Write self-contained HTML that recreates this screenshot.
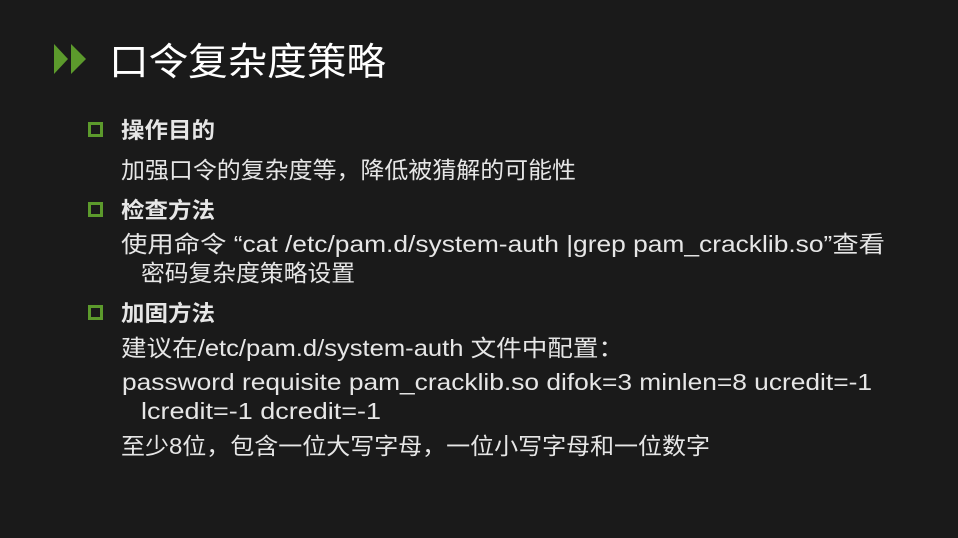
<!DOCTYPE html>
<html><head><meta charset="utf-8"><style>
html,body{margin:0;padding:0;background:#1a1a1a;width:958px;height:538px;overflow:hidden}
svg{display:block}
text{font-family:"Liberation Sans","Noto Sans CJK SC",sans-serif;fill:#e6e6e6}
</style></head><body>
<svg width="958" height="538" viewBox="0 0 958 538">
<rect width="958" height="538" fill="#1a1a1a"/>
<polygon points="54,44 68,59 54,74" fill="#5c9a2c"/>
<polygon points="71,44 86,59 71,74" fill="#5c9a2c"/>
<text x="109" y="75" font-size="38" style="fill:#fff" textLength="277" lengthAdjust="spacingAndGlyphs">口令复杂度策略</text>
<g fill="none" stroke="#5c9a2c" stroke-width="3">
<rect x="89.5" y="123.5" width="12" height="12"/>
<rect x="89.5" y="203.5" width="12" height="12"/>
<rect x="89.5" y="306.5" width="12" height="12"/>
</g>
<g font-weight="bold" font-size="22">
<text x="121" y="138" textLength="94" lengthAdjust="spacingAndGlyphs">操作目的</text>
<text x="121" y="218" textLength="94" lengthAdjust="spacingAndGlyphs">检查方法</text>
<text x="121" y="321" textLength="94" lengthAdjust="spacingAndGlyphs">加固方法</text>
</g>
<g font-size="23">
<text x="121" y="178" textLength="455" lengthAdjust="spacingAndGlyphs">加强口令的复杂度等，降低被猜解的可能性</text>
<text x="121" y="252" textLength="764" lengthAdjust="spacingAndGlyphs">使用命令 “cat /etc/pam.d/system-auth |grep pam_cracklib.so”查看</text>
<text x="141" y="281" textLength="214" lengthAdjust="spacingAndGlyphs">密码复杂度策略设置</text>
<text x="121" y="356" textLength="503" lengthAdjust="spacingAndGlyphs">建议在/etc/pam.d/system-auth 文件中配置：</text>
<text x="122" y="390" textLength="750" lengthAdjust="spacingAndGlyphs">password  requisite pam_cracklib.so difok=3 minlen=8 ucredit=-1</text>
<text x="141" y="419" textLength="240" lengthAdjust="spacingAndGlyphs">lcredit=-1 dcredit=-1</text>
<text x="121" y="454" textLength="589" lengthAdjust="spacingAndGlyphs">至少8位，包含一位大写字母，一位小写字母和一位数字</text>
</g>
</svg>
</body></html>
